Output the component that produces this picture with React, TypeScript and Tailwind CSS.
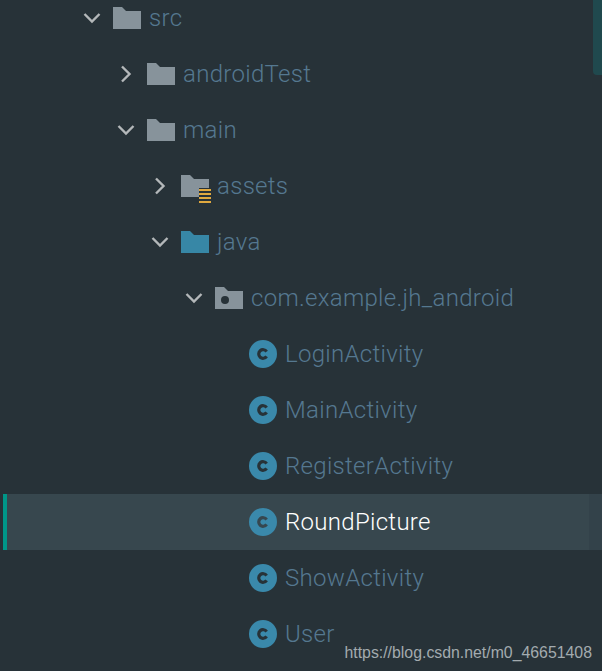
import { ReactNode } from 'react';

type IconKind = 'folder' | 'assets' | 'source' | 'package' | 'class';

interface TreeRow {
  label: string;
  indent: string;
  icon: IconKind;
  chevron?: 'open' | 'closed';
  selected?: boolean;
}

const rows: TreeRow[] = [
  { label: 'src', indent: 'pl-[75px]', icon: 'folder', chevron: 'open' },
  { label: 'androidTest', indent: 'pl-[109px]', icon: 'folder', chevron: 'closed' },
  { label: 'main', indent: 'pl-[109px]', icon: 'folder', chevron: 'open' },
  { label: 'assets', indent: 'pl-[143px]', icon: 'assets', chevron: 'closed' },
  { label: 'java', indent: 'pl-[143px]', icon: 'source', chevron: 'open' },
  { label: 'com.example.jh_android', indent: 'pl-[177px]', icon: 'package', chevron: 'open' },
  { label: 'LoginActivity', indent: 'pl-[211px]', icon: 'class' },
  { label: 'MainActivity', indent: 'pl-[211px]', icon: 'class' },
  { label: 'RegisterActivity', indent: 'pl-[211px]', icon: 'class' },
  { label: 'RoundPicture', indent: 'pl-[211px]', icon: 'class', selected: true },
  { label: 'ShowActivity', indent: 'pl-[211px]', icon: 'class' },
  { label: 'User', indent: 'pl-[211px]', icon: 'class' },
];

const folderPath = 'M0 0H9L13 4H28V22H0Z';

function FolderIcon({ color, children }: { color: string; children?: ReactNode }) {
  return (
    <svg width="28" height="22" viewBox="0 0 28 22" className="block overflow-visible">
      <path d={folderPath} fill={color} />
      {children}
    </svg>
  );
}

function RowIcon({ kind, selected }: { kind: IconKind; selected?: boolean }) {
  if (kind === 'folder') return <FolderIcon color="#87939b" />;
  if (kind === 'source') return <FolderIcon color="#3787a6" />;
  if (kind === 'package') {
    return (
      <FolderIcon color="#87939b">
        <circle cx="10" cy="13" r="4" fill="#273238" />
      </FolderIcon>
    );
  }
  if (kind === 'assets') {
    return (
      <FolderIcon color="#87939b">
        <rect x="18" y="13" width="12" height="16" fill="#273238" />
        <rect x="18" y="14" width="12" height="2" fill="#e0a93f" />
        <rect x="18" y="18" width="12" height="2" fill="#e0a93f" />
        <rect x="18" y="22" width="12" height="2" fill="#e0a93f" />
        <rect x="18" y="26" width="12" height="2" fill="#e0a93f" />
      </FolderIcon>
    );
  }
  return (
    <svg width="28" height="28" viewBox="0 0 28 28" className="block">
      <circle cx="14" cy="14" r="14" fill="#3a89ab" />
      <path
        d="M17.6 11.6A4.3 4.3 0 1 0 17.6 16.4"
        fill="none"
        stroke={selected ? '#36474f' : '#273238'}
        strokeWidth="3.2"
      />
    </svg>
  );
}

function Chevron({ dir }: { dir: 'open' | 'closed' }) {
  return (
    <svg width="18" height="18" viewBox="0 0 18 18" className="block">
      <path
        d={dir === 'open' ? 'M1.5 5L9 12.5L16.5 5' : 'M5 1.5L12.5 9L5 16.5'}
        fill="none"
        stroke="#b4b8ba"
        strokeWidth="2.4"
      />
    </svg>
  );
}

export default function App() {
  return (
    <div className="relative h-[671px] w-[602px] overflow-hidden bg-[#273238] font-['Roboto',sans-serif]">
      <div className="-mt-[10px] flex flex-col">
        {rows.map((row) => (
          <div
            key={row.label}
            className={`ml-[3px] flex h-14 items-center ${row.selected ? 'bg-[#37474e]' : ''}`}
          >
            <div className={`flex h-full w-full items-center ${row.indent} ${row.selected ? 'border-l-4 border-[#009688]' : ''}`}>
              <div className={`flex items-center ${row.selected ? '-ml-[4px]' : ''}`}>
                <div className="-ml-[3px] flex w-[34px] justify-center">
                  {row.chevron && <Chevron dir={row.chevron} />}
                </div>
                <div className="ml-[4px] flex h-7 w-7 items-center">
                  <RowIcon kind={row.icon} selected={row.selected} />
                </div>
                <span
                  className={`ml-2 text-[24px] font-light leading-none tracking-[0.3px] whitespace-nowrap ${row.selected ? 'text-white' : 'text-[#557890]'}`}
                >
                  {row.label}
                </span>
              </div>
            </div>
          </div>
        ))}
      </div>

      {/* scrollbar thumb and the gutter over the selected row */}
      <div className="absolute right-0 top-0 h-[75px] w-[9px] rounded-bl-[4px] bg-[#20494e]" />
      <div className="absolute right-0 top-[494px] h-14 w-[13px] bg-[#33424a]" />

      {/* watermark */}
      <div className="absolute bottom-[10px] right-[10px] translate-y-px font-['Liberation_Sans',sans-serif] text-[15.85px] leading-[18px] text-[#a3abaf]">
        https://blog.csdn.net/m0_46651408
      </div>
    </div>
  );
}
